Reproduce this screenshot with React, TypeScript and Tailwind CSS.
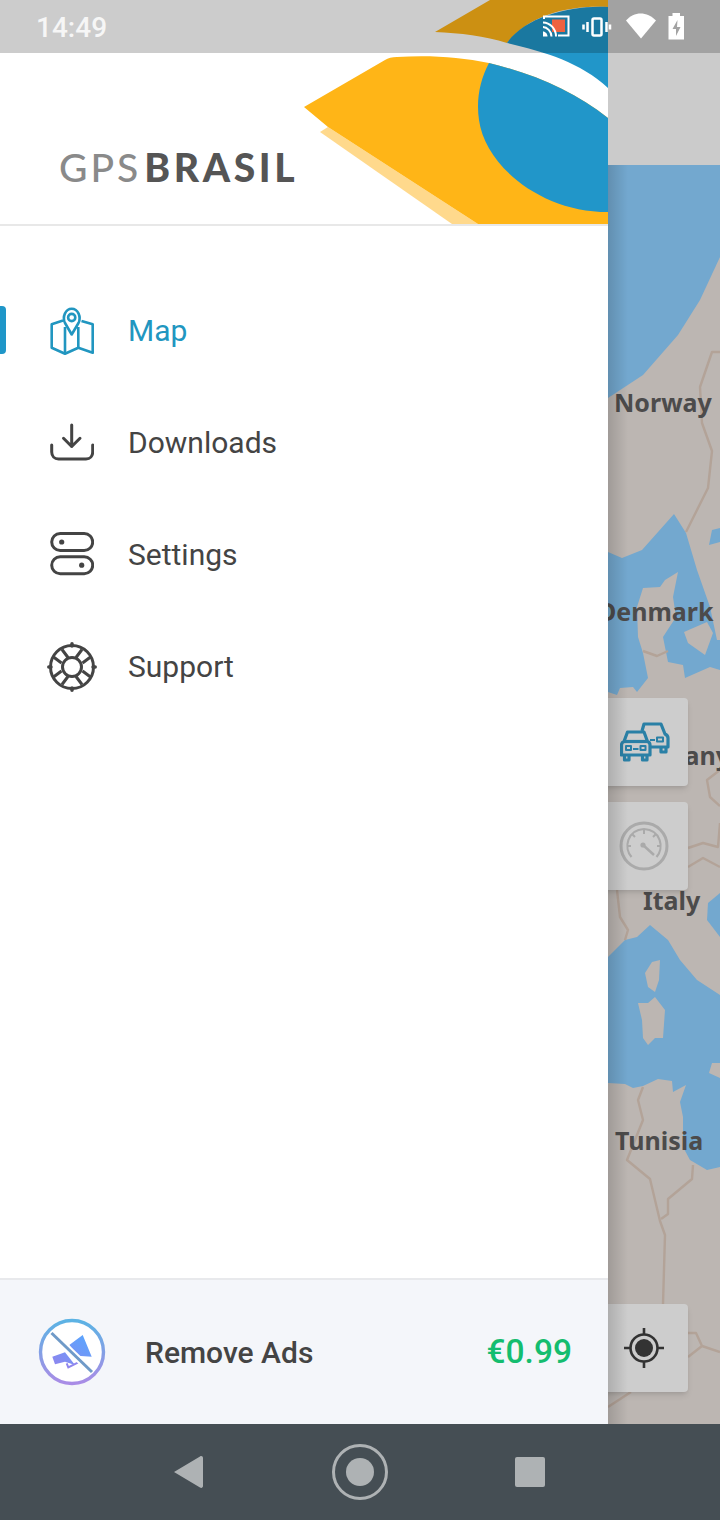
const land = "#bcb6b2";
const water = "#73a8cf";
const border = "#b3a398";

function StatusIcons() {
    return (
        <svg width="150" height="53" viewBox="540 0 150 53" className="mr-[30px] ml-auto">
            {/* cast */}
            <rect x="552" y="19.5" width="13" height="12.5" fill="#ee6240" />
            <path d="M544 19V16.5H568.5V35.5H558" fill="none" stroke="#fff" strokeWidth="2" />
            <path d="M543 22.5C550 22.5 556 29 556 36.5M543 27C547 27 551.5 31.5 551.5 36.5" fill="none" stroke="#fff" strokeWidth="2" />
            <path d="M543 31.5C545.5 31.5 547.5 34 547.5 36.5H543Z" fill="#fff" />
            {/* vibrate */}
            <rect x="592.5" y="18.5" width="9" height="17" rx="1.5" fill="none" stroke="#fff" strokeWidth="2.5" />
            <path d="M587.5 22V32M583.5 24.5V29.5M606.5 22V32M610 24.5V29.5" stroke="#fff" strokeWidth="2.5" />
            {/* wifi */}
            <path d="M626 20.5C634 11 647 11 656 20.5L641 38.5Z" fill="#fff" />
            {/* battery */}
            <path d="M672.5 13H680V16H684V39.5H668.5V16H672.5Z" fill="#fff" />
            <path d="M677.5 20L672.5 29H676V36L680.5 27H677Z" fill="#a3a3a3" />
        </svg>
    );
}

function Banner() {
    return (
        <svg width="608" height="224" viewBox="0 0 608 224" className="absolute top-0 left-0">
            <path d="M435 32L490 0H608V7C570 5 530 14 507 43C485 36 460 33 435 32Z" fill="#ffb517" />
            <path d="M507 43C525 17 570 5 608 7V88C580 62 545 52 507 43Z" fill="#2196c9" />
            <path d="M320 132L328 127L478 224H452Z" fill="#ffd98c" />
            <path d="M304 107L385 60C388 58 392 57 397 57C430 55 460 57 489 63C535 74 575 92 608 118V224H478L328 127Z" fill="#ffb517" />
            <path d="M489 63C535 74 575 92 608 118V212C540 212 485 165 479 120C476 100 480 80 489 63Z" fill="#2196c9" />
        </svg>
    );
}

function MapIcon() {
    return (
        <svg width="44" height="48" viewBox="0 0 44 48" fill="none" stroke="#2196c0" strokeWidth="2.6" strokeLinejoin="round">
            <path d="M13 13.5L1.7 17.3V40.7L15 46.7L28.3 40.7L42.7 45.7V17.3L31.5 14" />
            <path d="M15 20V46.7M28.3 20V40.7" />
            <path d="M21.7 27.5L15 16C12 10 15.5 1.7 21.7 1.7C28 1.7 31.5 10 28.5 16Z" fill="#fff" />
            <circle cx="21.7" cy="10.5" r="3.6" />
        </svg>
    );
}

function DownloadIcon() {
    return (
        <svg width="44" height="48" viewBox="0 0 44 48" fill="none" stroke="#444" strokeWidth="3" strokeLinecap="round" strokeLinejoin="round">
            <path d="M21.7 6V27.5M13.5 19.3L21.7 27.5L30 19.3" />
            <path d="M1.7 26V33C1.7 37 4.5 40 8.5 40H36C40 40 42.7 37 42.7 33V26" />
        </svg>
    );
}

function SettingsIcon() {
    return (
        <svg width="44" height="48" viewBox="0 0 44 48" fill="none" stroke="#444" strokeWidth="3">
            <rect x="1.7" y="2.5" width="41" height="17" rx="8.5" />
            <rect x="1.7" y="25.7" width="41" height="17" rx="8.5" />
            <circle cx="11.7" cy="11" r="2.6" fill="#444" stroke="none" />
            <circle cx="31.7" cy="34.2" r="2.6" fill="#444" stroke="none" />
        </svg>
    );
}

function SupportIcon() {
    return (
        <svg width="44" height="48" viewBox="0 0 44 48" fill="none" stroke="#444" strokeWidth="3" className="overflow-visible">
            <circle cx="22" cy="24" r="21.5" />
            <circle cx="22" cy="24" r="9.5" />
            <path d="M11.5 20L3.5 14M18 14.5L12 6.5M26 14.5L32 6.5M32.5 20L40.5 14M32.5 28L40.5 34M26 33.5L32 41.5M18 33.5L12 41.5M11.5 28L3.5 34" />
            <path d="M22 0.8V3M22 45V47.2M-1.2 24H1M43 24H45.2" strokeLinecap="round" strokeWidth="3.5" />
        </svg>
    );
}

function NoAdsIcon() {
    return (
        <svg width="72" height="72" viewBox="0 0 72 72" fill="none">
            <defs>
                <linearGradient id="ring" x1="0" y1="0" x2="0" y2="1">
                    <stop offset="0" stopColor="#5cb3e4" />
                    <stop offset="1" stopColor="#a98ce6" />
                </linearGradient>
                <linearGradient id="horn" x1="1" y1="0" x2="0" y2="1">
                    <stop offset="0" stopColor="#55a8ff" />
                    <stop offset="1" stopColor="#8f85ee" />
                </linearGradient>
            </defs>
            <circle cx="36" cy="36" r="31.5" fill="#fff" stroke="url(#ring)" strokeWidth="3.4" />
            <path d="M33.3 29L46.7 19L55.7 40.7L41.3 39.7ZM16.3 40.7L29 36.3L39 49L29 45.7L19 48.3Z" fill="url(#horn)" />
            <path d="M30.7 47.3L32.3 51.3L42.3 46.3" stroke="#8f85ee" strokeWidth="2" />
            <path d="M15.5 17L56 56" stroke="#fff" strokeWidth="7" />
            <path d="M15.5 17L56 56" stroke="#6f9ac8" strokeWidth="3" />
        </svg>
    );
}

function TrafficIcon() {
    return (
        <svg width="50" height="40" viewBox="0 0 50 40" fill="none" stroke="#2a80a6" strokeWidth="3.2" strokeLinejoin="round">
            <path d="M22 9L24 2H41L45 12C47 13 48 14.5 48 16V25H31" />
            <path d="M41 25V30H46V25" />
            <path d="M37 15.5H43V19.5H37ZM30 18H35" strokeWidth="2" />
            <path d="M1.5 23C1.5 21.5 2.5 20 4 19.5L7.5 10H24L27.5 19.5C29 20 30 21.5 30 23V33H1.5Z" fill="#cdcdcd" />
            <path d="M4 19.5H27.5" />
            <rect x="6" y="24" width="5" height="4" strokeWidth="2" />
            <rect x="20.5" y="24" width="5" height="4" strokeWidth="2" />
            <path d="M13 27H18.5" strokeWidth="2" />
            <path d="M4.5 33V38H9V33M22.5 33V38H27V33" />
        </svg>
    );
}

function GaugeIcon() {
    return (
        <svg width="50" height="50" viewBox="0 0 50 50" fill="none" stroke="#aaa" strokeWidth="3">
            <circle cx="25" cy="25" r="23" />
            <path d="M12.5 36C4.5 27 8 9 25 8C42 9 45.5 27 37.5 36" strokeWidth="2.2" />
            <path d="M25 8V13M13 13L16 16M37 13L34 16M8 25H12M42 25H38" strokeWidth="2" />
            <circle cx="24" cy="24" r="2.6" fill="#aaa" stroke="none" />
            <path d="M24 24L35 34" strokeWidth="2.5" />
        </svg>
    );
}

function LocateIcon() {
    return (
        <svg width="44" height="44" viewBox="0 0 44 44" fill="none" stroke="#333" strokeWidth="2.6">
            <circle cx="22" cy="22" r="13.5" />
            <circle cx="22" cy="22" r="9" fill="#333" stroke="none" />
            <path d="M22 2V8.5M22 35.5V42M2 22H8.5M35.5 22H42" />
        </svg>
    );
}

function MapArea() {
    return (
        <svg width="112" height="1259" viewBox="608 165 112 1259" className="absolute top-[165px] left-0">
            <rect x="608" y="165" width="112" height="1259" fill={land} />
            <path d="M608 165H720V257L700 300L678 335L643 375L608 398Z" fill={water} />
            <path d="M674 514L686 533L697 570L710 607L717 640H720V670L710 667L685 678L683 665L668 662L663 637L676 617L673 597L678 572L665 580L660 587L643 588L637 607L638 637L643 653L648 678L637 692L633 687L620 688L617 695L608 692V552L622 558L642 550Z" fill={water} />
            <path d="M684 632L707 622L713 633L705 655L688 643Z" fill={land} />
            <path d="M712 530L720 528V542L709 545Z" fill={water} />
            <path d="M720 893L708 903L707 920L720 937Z" fill={water} />
            <path d="M608 957L625 940L637 937L650 925L668 940L680 960L697 980L720 995V1063L712 1063L709 1073L720 1078V1167L707 1170L690 1160L683 1147L683 1117L680 1102L686 1085L673 1092L672 1081L658 1079L643 1086L633 1088L625 1084L608 1083Z" fill={water} />
            <path d="M645 973L652 962L660 960L659 980L655 992L648 987Z" fill={land} />
            <path d="M638 1003L648 1003L655 997L665 1010L663 1038L655 1038L648 1045L643 1038L642 1020Z" fill={land} />
            <g fill="none" stroke={border} strokeWidth="2.4" strokeLinejoin="round">
                <path d="M720 352H712L700 387L702 423L712 451L708 488L686 532" />
                <path d="M643 651L657 656L668 651" />
                <path d="M720 770L707 780L710 797L720 806" />
                <path d="M720 823L718 847L703 843L688 848" />
                <path d="M720 867L703 858L688 867" />
                <path d="M617 890L620 917L628 930L625 940" />
                <path d="M643 1087L638 1100L643 1120L627 1160L650 1179L660 1221L665 1235L663 1304" />
                <path d="M693 1165L692 1179L668 1199L668 1214L661 1219" />
                <path d="M608 1407L631 1392" />
                <path d="M688 1333H696L702 1346L720 1352M688 1357L702 1346" />
            </g>
            <g className="fill-[#4c4b4b] font-['Noto_Sans',sans-serif] text-[25px] font-bold">
                <text x="614" y="412">Norway</text>
                <text x="598" y="621">Denmark</text>
                <text x="616" y="765">Germany</text>
                <text x="643" y="910">Italy</text>
                <text x="615" y="1150">Tunisia</text>
            </g>
        </svg>
    );
}

const menuItems = [
    { label: "Map", icon: <MapIcon />, active: true },
    { label: "Downloads", icon: <DownloadIcon /> },
    { label: "Settings", icon: <SettingsIcon /> },
    { label: "Support", icon: <SupportIcon /> },
];

export default function App() {
    return (
        <div className="relative flex h-[1520px] w-[720px] flex-col overflow-hidden bg-white font-['Roboto',sans-serif]">
            {/* status bar sits over the drawer and the map */}
            <div className="absolute top-0 left-0 z-30 flex h-[53px] w-full items-center bg-black/20">
                <span className="pt-[2px] pl-[36px] text-[28px] font-medium text-[#f6f6f6]">14:49</span>
                <StatusIcons />
            </div>

            <div className="flex h-[1424px]">
                {/* drawer */}
                <div className="z-10 flex w-[608px] flex-col bg-white">
                    <div className="relative flex h-[226px] items-end border-b-2 border-[#e8e8e8] pb-[35px] pl-[59px]">
                        <Banner />
                        <span className="relative font-['Lato',sans-serif] text-[39px] leading-[44px] font-medium tracking-[3px] text-[#8a8a8a]">
                            GPS<span className="ml-[3px] font-black tracking-[3.6px] text-[#555555]">BRASIL</span>
                        </span>
                    </div>
                    <div className="flex-1 pt-[49px]">
                        {menuItems.map((item) => (
                            <div key={item.label} className="relative flex h-[112px] items-center gap-[34px] pl-[50px]">
                                {item.active && <div className="absolute top-[31px] left-0 h-[48px] w-[6px] rounded-r bg-[#1f96c8]" />}
                                {item.icon}
                                <span className={item.active ? "pb-[2px] text-[30px] text-[#2196c0]" : "pb-[2px] text-[30px] text-[#444444]"}>{item.label}</span>
                            </div>
                        ))}
                    </div>
                    <div className="flex h-[146px] items-center border-t-2 border-[#e8e9ec] bg-[#f4f6fa] pr-[36px] pl-[36px]">
                        <NoAdsIcon />
                        <span className="ml-[37px] text-[30px] font-medium text-[#444444]">Remove Ads</span>
                        <span className="ml-auto text-[33.5px] font-medium text-[#14bd6f]">€0.99</span>
                    </div>
                </div>

                {/* map behind the drawer */}
                <div className="relative w-[112px] bg-[#cbcbcb]">
                    <MapArea />
                    <div className="absolute top-[698px] left-[-8px] flex h-[88px] w-[88px] items-center justify-center rounded bg-[#cdcdcd] pl-[2px] shadow-md">
                        <TrafficIcon />
                    </div>
                    <div className="absolute top-[802px] left-[-8px] flex h-[88px] w-[88px] items-center justify-center rounded bg-[#cdcdcd] shadow-md">
                        <GaugeIcon />
                    </div>
                    <div className="absolute top-[1304px] left-[-8px] flex h-[88px] w-[88px] items-center justify-center rounded bg-[#cdcdcd] shadow-md">
                        <LocateIcon />
                    </div>
                    <div className="absolute top-[165px] bottom-0 left-0 w-[20px] bg-linear-to-r from-black/15 to-transparent" />
                </div>
            </div>

            {/* nav bar */}
            <div className="flex h-[96px] items-center justify-center bg-[#454e54]">
                <svg width="400" height="96" viewBox="160 0 400 96">
                    <path d="M174 48L200 32.5C201.5 31.5 203 32.5 203 34V62C203 63.5 201.5 64.5 200 63.5Z" fill="#aeb2b4" />
                    <circle cx="360" cy="48" r="26.5" fill="none" stroke="#aeb2b4" strokeWidth="3" />
                    <circle cx="360" cy="48" r="14" fill="#aeb2b4" />
                    <rect x="515" y="33" width="30" height="30" rx="2" fill="#aeb2b4" />
                </svg>
            </div>
        </div>
    );
}
